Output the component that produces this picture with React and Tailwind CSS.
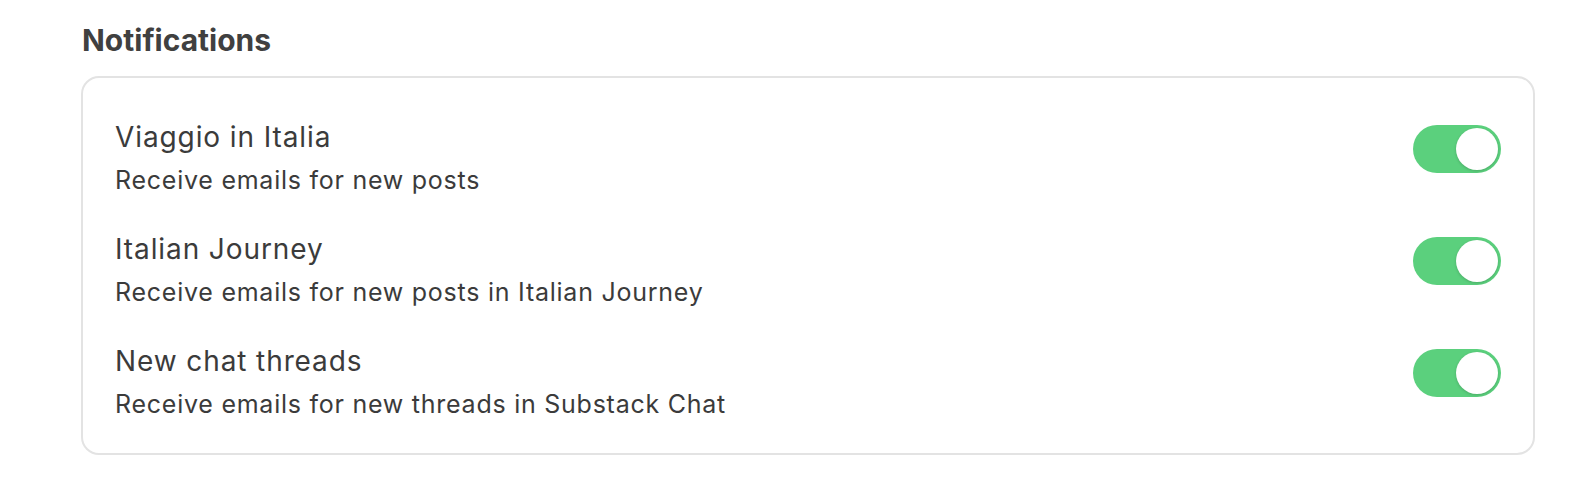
import React from "react";

const rows = [
  { title: "Viaggio in Italia", sub: "Receive emails for new posts" },
  { title: "Italian Journey", sub: "Receive emails for new posts in Italian Journey" },
  { title: "New chat threads", sub: "Receive emails for new threads in Substack Chat" },
];

function Toggle() {
  return (
    <div className="mt-[4px] flex h-[48px] w-[88px] shrink-0 items-center justify-end rounded-full bg-[#5bd07d] p-[3px]">
      <div className="h-[42px] w-[42px] rounded-full bg-white shadow-[0_1px_3px_rgba(0,0,0,0.18)]" />
    </div>
  );
}

export default function App() {
  return (
    <div className="min-h-[496px] w-full bg-white pt-[22px] text-[#3b3b3b]" style={{ fontFamily: "Inter, 'Noto Sans', sans-serif" }}>
      <div className="ml-[81px] w-[1454px]">
        <h2 className="pl-px text-[30px] font-bold leading-[36px] text-[#404040]">Notifications</h2>
        <div className="mt-[18px] flex flex-col gap-[38px] rounded-[18px] border-2 border-[#e3e3e3] px-8 pt-[43px] pb-[34px]">
          {rows.map((r) => (
            <div key={r.title} className="flex items-start justify-between">
              <div className="flex flex-col">
                <div className="text-[28px] leading-[32px] tracking-[0.9px]">{r.title}</div>
                <div className="mt-3 text-[25px] leading-[30px] tracking-[0.75px]">{r.sub}</div>
              </div>
              <Toggle />
            </div>
          ))}
        </div>
      </div>
    </div>
  );
}
